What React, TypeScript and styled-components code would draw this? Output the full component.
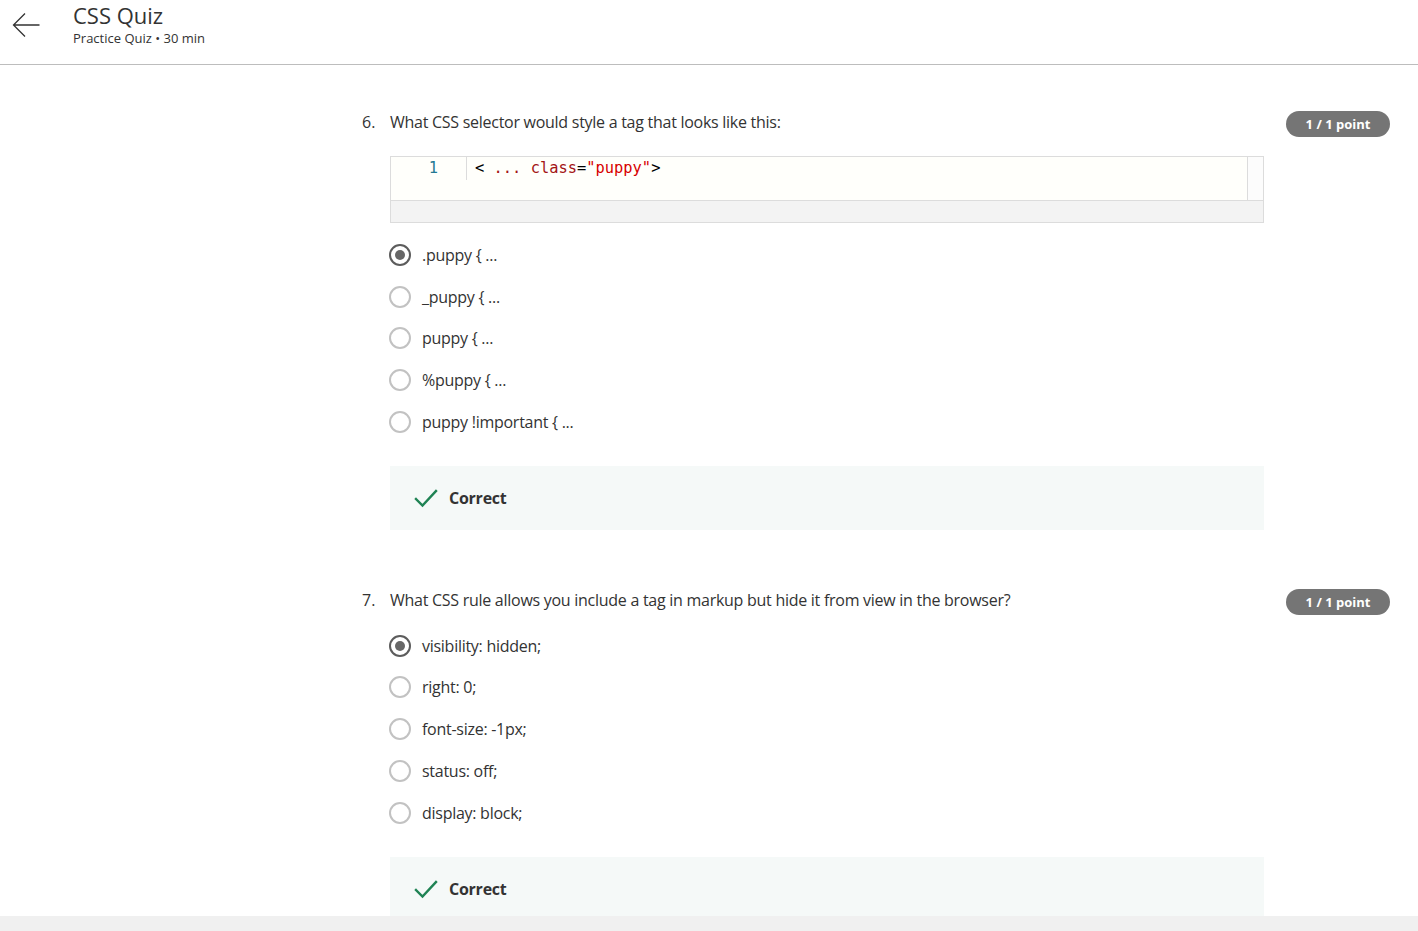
import React from "react";
import styled, { createGlobalStyle } from "styled-components";

const GlobalStyle = createGlobalStyle`
  html, body { margin: 0; padding: 0; background: #fff; }
  body { font-family: "Open Sans", "Noto Sans", sans-serif; color: #333; }
  * { box-sizing: border-box; }
`;

const Page = styled.div`
  height: 100vh;
  display: flex;
  flex-direction: column;
  overflow: hidden;
`;

const Header = styled.header`
  flex: 0 0 65px;
  display: flex;
  align-items: flex-start;
  border-bottom: 1px solid #bdbdbd;
`;

const BackButton = styled.button`
  width: 73px;
  height: 50px;
  padding: 0 0 0 12px;
  border: 0;
  background: none;
  display: flex;
  align-items: center;
  cursor: pointer;
`;

const TitleBlock = styled.div`
  display: flex;
  flex-direction: column;
  padding-top: 1px;
`;

const Title = styled.h1`
  margin: 0;
  font-size: 22px;
  font-weight: 400;
  line-height: 28px;
  color: #333;
  margin-bottom: 1px;
`;

const Subtitle = styled.div`
  font-size: 13px;
  line-height: 17px;
  color: #333;
`;

const Main = styled.main`
  flex: 1;
  overflow: hidden;
  padding: 45px 28px 0 362px;
`;

const Footer = styled.div`
  flex: 0 0 15px;
  background: #f0f0f0;
`;

const Question = styled.section`
  display: grid;
  grid-template-columns: 28px 874px 1fr;
  margin-bottom: 58px;
`;

const Num = styled.div`
  font-size: 16px;
  line-height: 24px;
`;

const Body = styled.div`
  display: flex;
  flex-direction: column;
`;

const Prompt = styled.div`
  font-size: 16px;
  line-height: 24px;
  letter-spacing: -0.27px;
`;

const Badge = styled.div`
  justify-self: end;
  align-self: start;
  margin-top: 1px;
  width: 104px;
  height: 26px;
  border-radius: 13px;
  background: #757575;
  color: #fff;
  font-size: 13px;
  font-weight: 700;
  display: flex;
  align-items: center;
  justify-content: center;
`;

const CodeBox = styled.div`
  margin-top: 22px;
  border: 1px solid #dcdcdc;
  display: flex;
  flex-direction: column;
`;

const Editor = styled.div`
  height: 43px;
  background: #fffffb;
  display: flex;
`;

const Gutter = styled.div`
  width: 76px;
  height: 23px;
  padding-right: 28px;
  text-align: right;
  font-family: "DejaVu Sans Mono", monospace;
  font-size: 15.4px;
  line-height: 22px;
  color: #237893;
  border-right: 1px solid #dcdcdc;
`;

const CodeLine = styled.div`
  flex: 1;
  padding-left: 8px;
  font-family: "DejaVu Sans Mono", monospace;
  font-size: 15.4px;
  line-height: 22px;
  color: #000;
  white-space: pre;
`;

const Scroll = styled.div`
  width: 16px;
  border-left: 1px solid #dcdcdc;
  background: #fcfcfc;
`;

const CodeFoot = styled.div`
  height: 22px;
  border-top: 1px solid #dcdcdc;
  background: #f3f3f3;
`;

const Tok = styled.span<{ $c: string }>`
  color: ${(p) => p.$c};
`;

const Options = styled.div<{ $top: number }>`
  margin-top: ${(p) => p.$top}px;
  display: flex;
  flex-direction: column;
  margin-left: -1px;
`;

const Option = styled.label`
  height: 41.75px;
  display: flex;
  align-items: center;
  gap: 11px;
  font-size: 16px;
  letter-spacing: -0.27px;
  color: #333;
`;

const Radio = styled.span<{ $on?: boolean }>`
  width: 22px;
  height: 22px;
  border-radius: 50%;
  border: 2px solid ${(p) => (p.$on ? "#5c5c5c" : "#c2c2c2")};
  display: flex;
  align-items: center;
  justify-content: center;
  &::after {
    content: "";
    width: 10px;
    height: 10px;
    border-radius: 50%;
    background: ${(p) => (p.$on ? "#666" : "transparent")};
  }
`;

const Feedback = styled.div`
  margin-top: 23px;
  height: 64px;
  background: #f5f9f8;
  display: flex;
  align-items: center;
  padding-left: 24px;
  gap: 11px;
  font-size: 16px;
  font-weight: 700;
  letter-spacing: -0.25px;
  color: #333;
`;

const ArrowIcon = () => (
  <svg width="28" height="26" viewBox="0 0 28 26" fill="none" stroke="#333" strokeWidth="1.3">
    <path d="M1.5 13H27.5M13 1.5L1.5 13L13 24.5" />
  </svg>
);

const CheckIcon = () => (
  <svg width="24" height="20" viewBox="0 0 24 20" fill="none" stroke="#1f8354" strokeWidth="2.4" strokeLinecap="square">
    <path d="M2 11L8.5 17.5L22 3" />
  </svg>
);

type Q = {
  n: number;
  prompt: string;
  code?: boolean;
  options: string[];
  selected: number;
};

const questions: Q[] = [
  {
    n: 6,
    prompt: "What CSS selector would style a tag that looks like this:",
    code: true,
    options: [".puppy { ...", "_puppy { ...", "puppy { ...", "%puppy { ...", "puppy !important { ..."],
    selected: 0,
  },
  {
    n: 7,
    prompt: "What CSS rule allows you include a tag in markup but hide it from view in the browser?",
    options: ["visibility: hidden;", "right: 0;", "font-size: -1px;", "status: off;", "display: block;"],
    selected: 0,
  },
];

export default function App() {
  return (
    <Page>
      <GlobalStyle />
      <Header>
        <BackButton aria-label="Back">
          <ArrowIcon />
        </BackButton>
        <TitleBlock>
          <Title>CSS Quiz</Title>
          <Subtitle>Practice Quiz • 30 min</Subtitle>
        </TitleBlock>
      </Header>
      <Main>
        {questions.map((q) => (
          <Question key={q.n}>
            <Num>{q.n}.</Num>
            <Body>
              <Prompt>{q.prompt}</Prompt>
              {q.code && (
                <CodeBox>
                  <Editor>
                    <Gutter>1</Gutter>
                    <CodeLine>
                      {"< "}
                      <Tok $c="#a31515">...</Tok> <Tok $c="#a31515">class</Tok>=<Tok $c="#d70000">"puppy"</Tok>
                      {">"}
                    </CodeLine>
                    <Scroll />
                  </Editor>
                  <CodeFoot />
                </CodeBox>
              )}
              <Options $top={q.code ? 11 : 13}>
                {q.options.map((o, i) => (
                  <Option key={o}>
                    <Radio $on={i === q.selected} />
                    {o}
                  </Option>
                ))}
              </Options>
              <Feedback>
                <CheckIcon />
                Correct
              </Feedback>
            </Body>
            <Badge>1 / 1 point</Badge>
          </Question>
        ))}
      </Main>
      <Footer />
    </Page>
  );
}
